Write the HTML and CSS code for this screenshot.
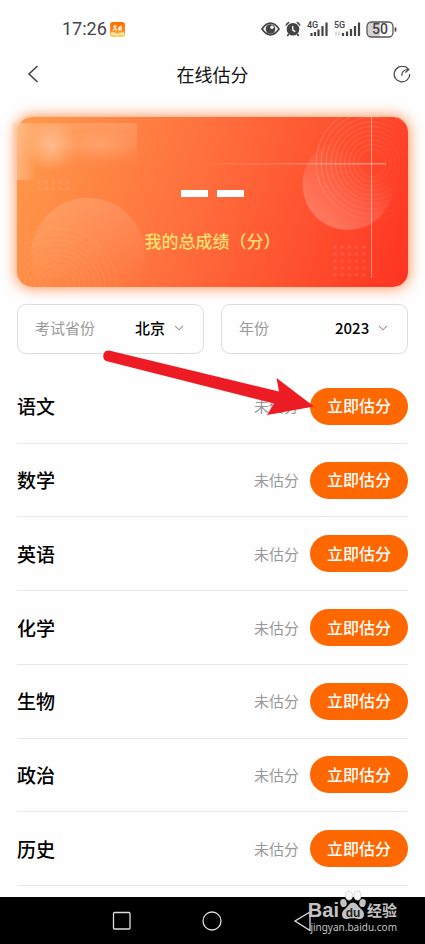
FILE: index.html
```html
<!DOCTYPE html>
<html lang="zh-CN">
<head>
<meta charset="utf-8">
<meta name="viewport" content="width=device-width, initial-scale=1">
<title>在线估分</title>
<link rel="stylesheet" href="styles.css">
</head>
<body>
<div class="screen">
  <div class="status">
    <span class="clock">17:26</span>
    <svg class="app-icon" width="15" height="15" viewBox="0 0 15 15" aria-hidden="true">
      <defs><linearGradient id="app" x1="0" y1="0" x2="0" y2="1"><stop offset="0" stop-color="#ff6a00"/><stop offset=".6" stop-color="#ff8d1c"/><stop offset="1" stop-color="#ffd35a"/></linearGradient></defs>
      <rect width="15" height="15" rx="3" fill="url(#app)"/>
      <path d="M1 10.500q4-.7 6.500 1.500q2.500-2.200 6.500-1.500v2.500q-4-.5-6.500 1.300q-2.500-1.800-6.500-1.300z" fill="#ffe9a8"/>
      <path d="M5 2.800v1.200M3 4.600l4-.6M4 6l2-.5M3 9l.7-1.800l3-.3l-.6 2.200M8 6.700l4-1M9.300 4.500l-.3 4.500M11 3.500v5.500" stroke="#fff" fill="none"/>
    </svg>
    <span class="spacer"></span>
    <svg width="19" height="14" viewBox="0 0 19 14" aria-hidden="true">
      <path d="M1 7Q5 1.200 9.500 1.200T18 7Q14 12.800 9.500 12.800T1 7z" fill="none" stroke="#444" stroke-width="1.700"/>
      <circle cx="9.500" cy="7" r="4.800" fill="#444"/><circle cx="11" cy="5.200" r="1.700" fill="#fff"/>
    </svg>
    <svg class="alarm" width="16" height="16" viewBox="0 0 16 16" aria-hidden="true">
      <circle cx="8" cy="8.300" r="6.300" fill="#444"/>
      <path d="M1 4.500Q2 2 4.300 1.200M15 4.500Q14 2 11.700 1.200M3.800 13l-1.500 2M12.200 13l1.500 2" stroke="#444" stroke-width="1.700" fill="none"/>
      <path d="M7.700 5v3.800l2.500 2" stroke="#fff" stroke-width="1.400" fill="none"/>
    </svg>
    <svg class="signal" width="22" height="16" viewBox="0 0 22 16" aria-hidden="true">
      <text x="0" y="7" class="net">4G</text>
      <path d="M4.500 12v3M8 11v4M11.500 8.500v6.500M15.500 5v10M19.500 1.500v13.500" stroke="#444" stroke-width="2.200" fill="none"/>
    </svg>
    <svg class="signal second" width="27" height="16" viewBox="0 0 27 16" aria-hidden="true">
      <text x="0" y="7" class="net">5G</text>
      <path d="M2 10.500v4M5 10.500v4" stroke="#ccc" stroke-width="1.500"/>
      <path d="M9 12v3M13 10.500v4.500M17 8v7M21 5v10M25 1.500v13.500" stroke="#444" stroke-width="2.200" fill="none"/>
    </svg>
    <svg class="battery" width="31" height="17" viewBox="0 0 31 17" aria-label="50%">
      <path d="M5 1h9v15H5a4 4 0 0 1-4-4V5a4 4 0 0 1 4-4z" fill="#d3d3d3"/>
      <rect x="1" y="1" width="26" height="15" rx="4.500" fill="none" stroke="#555" stroke-width="1.300"/>
      <path d="M29.500 6.500v4" stroke="#444" stroke-width="1.700"/>
      <text x="14" y="13" text-anchor="middle" class="charge">50</text>
    </svg>
  </div>

  <header class="topbar">
    <button class="icon-btn" type="button" aria-label="返回">
      <svg width="12" height="18" viewBox="0 0 12 18"><path d="M10.500 1L2 9l8.500 8" fill="none" stroke="#444" stroke-width="1.600"/></svg>
    </button>
    <h1>在线估分</h1>
    <button class="icon-btn share" type="button" aria-label="分享">
      <svg width="18" height="18" viewBox="0 0 18 18" fill="none" stroke="#444" stroke-width="1.200"><path d="M12 1.900A7.800 7.800 0 1 0 16.800 9"/><path d="M8.800 10.800Q8.600 4.500 15.500 4.500M12.300 1.500l3.500 3l-3.500 3"/></svg>
    </button>
  </header>

  <main>
    <section class="card">
      <svg class="art" viewBox="0 0 391 170" preserveAspectRatio="none" aria-hidden="true">
        <defs>
          <linearGradient id="moon" x1=".2" y1=".9" x2=".65" y2=".25"><stop offset="0" stop-color="#fff" stop-opacity=".24"/><stop offset="1" stop-color="#fff" stop-opacity="0"/></linearGradient>
          <linearGradient id="disc" x1=".5" y1="0" x2=".6" y2="1"><stop offset="0" stop-color="#fff" stop-opacity=".15"/><stop offset=".8" stop-color="#fff" stop-opacity="0"/></linearGradient>
          <linearGradient id="ring" gradientUnits="userSpaceOnUse" x1="300" y1="40" x2="391" y2="60"><stop offset="0" stop-color="#fff" stop-opacity=".2"/><stop offset="1" stop-color="#fff" stop-opacity=".02"/></linearGradient>
          <linearGradient id="hair" gradientUnits="userSpaceOnUse" x1="170" y1="0" x2="369" y2="0"><stop offset="0" stop-color="#fff" stop-opacity="0"/><stop offset="1" stop-color="#fff" stop-opacity=".4"/></linearGradient>
        </defs>
        <circle cx="331" cy="67.500" r="45.500" fill="url(#moon)"/>
        <g fill="none" stroke="url(#ring)">
          <circle cx="355" cy="46" r="14"/><circle cx="355" cy="46" r="18.500"/><circle cx="355" cy="46" r="23"/><circle cx="355" cy="46" r="27.500"/><circle cx="355" cy="46" r="32"/><circle cx="355" cy="46" r="36.500"/><circle cx="355" cy="46" r="41"/><circle cx="355" cy="46" r="46"/><circle cx="355" cy="46" r="51"/><circle cx="355" cy="46" r="56"/>
        </g>
        <rect x="170" y="46" width="199" height="1.500" fill="url(#hair)"/>
        <rect x="354" y="0" width="1" height="161" fill="#fff" fill-opacity=".42"/>
        <circle cx="71" cy="138" r="57" fill="url(#disc)"/>
        <g fill="none" stroke="#fff" stroke-opacity=".09">
          <circle cx="40" cy="171" r="13"/><circle cx="40" cy="171" r="18"/><circle cx="40" cy="171" r="23"/><circle cx="40" cy="171" r="28"/><circle cx="40" cy="171" r="33"/><circle cx="40" cy="171" r="38"/><circle cx="40" cy="171" r="43"/><circle cx="40" cy="171" r="48"/><circle cx="40" cy="171" r="54"/><circle cx="40" cy="171" r="60"/>
        </g>
        <g fill="none" stroke="#fff" stroke-opacity=".12" stroke-width="3.600" stroke-linecap="round" stroke-dasharray="0 7.200">
          <path d="M22 65h29.500M22 72h29.500M318 130h29.500M318 137h29.500M318 144h29.500M318 151h29.500M318 158h29.500"/>
        </g>
      </svg>
      <div class="smudge"></div>
      <div class="score" role="img" aria-label="暂无成绩"><span></span><span></span></div>
      <p class="caption">我的总成绩（分）</p>
    </section>

    <form class="filters">
      <div class="field">
        <label for="province">考试省份</label>
        <select id="province"><option>北京</option></select>
        <svg width="10" height="6" viewBox="0 0 10 6" aria-hidden="true"><path d="M1 .8l4 4l4-4" fill="none" stroke="#999" stroke-width="1.100"/></svg>
      </div>
      <div class="field">
        <label for="year">年份</label>
        <select id="year"><option>2023</option></select>
        <svg width="10" height="6" viewBox="0 0 10 6" aria-hidden="true"><path d="M1 .8l4 4l4-4" fill="none" stroke="#999" stroke-width="1.100"/></svg>
      </div>
    </form>

    <ul class="subjects">
      <li><h2>语文</h2><span class="state">未估分</span><button class="go" type="button">立即估分</button></li>
      <li><h2>数学</h2><span class="state">未估分</span><button class="go" type="button">立即估分</button></li>
      <li><h2>英语</h2><span class="state">未估分</span><button class="go" type="button">立即估分</button></li>
      <li><h2>化学</h2><span class="state">未估分</span><button class="go" type="button">立即估分</button></li>
      <li><h2>生物</h2><span class="state">未估分</span><button class="go" type="button">立即估分</button></li>
      <li><h2>政治</h2><span class="state">未估分</span><button class="go" type="button">立即估分</button></li>
      <li><h2>历史</h2><span class="state">未估分</span><button class="go" type="button">立即估分</button></li>
    </ul>
  </main>

  <nav class="sysnav">
    <button type="button" aria-label="最近任务"><svg width="20" height="20" viewBox="0 0 20 20"><rect x="1.500" y="1.500" width="16.500" height="16.500" rx="1" /></svg></button>
    <button type="button" aria-label="主屏幕"><svg width="20" height="20" viewBox="0 0 20 20"><circle cx="10" cy="10" r="9"/></svg></button>
    <button type="button" aria-label="返回"><svg width="20" height="20" viewBox="0 0 20 20"><path d="M17 1v18.500L2 10z"/></svg></button>
  </nav>

  <svg class="arrow" width="212" height="68" viewBox="0 0 212 68" aria-hidden="true">
    <path d="M7 .5L177 41.500L174.500 28L212 56.500L165 65L172 53.500L5 11.200A5.500 5.500 0 0 1 7 .5z" fill="#ed1c24"/>
  </svg>

  <div class="watermark">
    <div class="brand">
      <span>Bai</span>
      <svg width="28" height="30" viewBox="0 0 28 30" aria-hidden="true">
        <g fill="#c3c3c3"><ellipse cx="4.500" cy="13" rx="3.200" ry="4" transform="rotate(-12 4.500 13)"/><ellipse cx="23.500" cy="13" rx="3.200" ry="4" transform="rotate(12 23.500 13)"/>
        <path d="M14 12.500c3 0 4.500 3 6.500 5s4.500 3.500 4.500 7c0 3-2 4.500-4.500 4.500c-2.500 0-4-.7-6.500-.7s-4 .7-6.500.7c-2.500 0-4.500-1.500-4.500-4.500c0-3.500 2.500-5 4.500-7s3.500-5 6.500-5z"/></g>
        <g fill="#f8f8f8" stroke="#d0d0d0" stroke-width=".8"><ellipse cx="10" cy="5.500" rx="3.400" ry="4.600"/><ellipse cx="18.500" cy="5.500" rx="3.400" ry="4.600"/></g>
        <text x="14" y="26.500" text-anchor="middle" class="du">du</text>
      </svg>
      <span class="cn">经验</span>
    </div>
    <div class="site">jingyan.baidu.com</div>
  </div>
</div>
</body>
</html>
```
FILE: styles.css
```css
* { box-sizing: border-box; }

body {
  margin: 0;
  background: #fefefe;
  color: #111;
  font-family: "Noto Sans CJK SC", sans-serif;
}

button, select {
  margin: 0;
  padding: 0;
  border: 0;
  background: none;
  color: inherit;
  font: inherit;
}

h1, h2, p, ul { margin: 0; padding: 0; }
svg { display: block; flex: none; }

.screen {
  position: relative;
  display: flex;
  flex-direction: column;
  min-height: 100vh;
}

.status {
  display: flex;
  align-items: center;
  height: 50px;
  padding: 8px 28px 0 62px;
}
.clock {
  font: 18px/20px Roboto, sans-serif;
  color: #444;
}
.app-icon { margin-left: 3px; }
.spacer { flex: 1; }
.alarm { margin-left: 5px; }
.signal { margin-left: 6px; }
.second { margin-left: 5px; }
.battery { margin-left: 5px; }
.net { font: 500 9px Roboto, sans-serif; fill: #444; }
.charge { font: 500 14px Roboto, sans-serif; fill: #444; }

.topbar {
  display: grid;
  grid-template-columns: 1fr auto 1fr;
  align-items: center;
  height: 48px;
  margin-bottom: 2px;
  padding: 0 14px;
}
.topbar h1 {
  font-size: 18px;
  line-height: 26px;
  font-weight: 400;
}
.icon-btn {
  display: flex;
  padding-left: 13px;
}
.share {
  padding-left: 0;
  justify-content: flex-end;
}

main {
  flex: 1;
  display: flex;
  flex-direction: column;
  padding: 17px 17px 11px;
}

.card {
  position: relative;
  height: 170px;
  border-radius: 15px;
  background: linear-gradient(110deg, #ff9b4b 0%, #ff6c3c 48%, #ff3321 100%);
  box-shadow: 0 0 14px 1px rgba(255, 110, 30, .75);
  display: flex;
  flex-direction: column;
  align-items: center;
  padding-top: 73px;
}
.art {
  position: absolute;
  inset: 0;
  width: 100%;
  height: 100%;
  border-radius: 15px;
}
.smudge {
  position: absolute;
  top: 6px;
  left: -4px;
  width: 124px;
  height: 57px;
  background:
    radial-gradient(circle at 38px 22px, rgba(255, 222, 195, .5), transparent 26px),
    radial-gradient(ellipse at 88px 22px, rgba(255, 200, 160, .3), transparent 40px),
    linear-gradient(90deg, rgba(255, 205, 165, .65), transparent 24px),
    linear-gradient(180deg, rgba(255, 190, 150, .35), transparent 45px);
}
.score { position: relative; display: flex; gap: 9px; }
.score span { width: 27px; height: 7px; background: #fff; }
.caption {
  position: relative;
  margin-top: 31px;
  font-size: 17px;
  line-height: 26px;
  font-weight: 500;
  color: #ffe071;
}

.filters {
  display: grid;
  grid-template-columns: 1fr 1fr;
  gap: 17px;
  margin-top: 17px;
}
.field {
  display: flex;
  align-items: center;
  height: 50px;
  padding: 0 19px 2px 17px;
  border: 1px solid #ddd;
  border-radius: 9px;
  font-size: 15px;
  line-height: 22px;
}
.field label { flex: 1; color: #999; }
.field select {
  appearance: none;
  margin-right: 8px;
  color: #000;
  font-weight: 500;
}

.subjects {
  flex: 1;
  display: flex;
  flex-direction: column;
  margin-top: 16px;
  list-style: none;
}
.subjects li {
  flex: 1;
  display: flex;
  align-items: center;
  gap: 11px;
  min-height: 60px;
  border-bottom: 1px solid #e8e8e8;
}
.subjects h2 {
  flex: 1;
  font-size: 19px;
  line-height: 28px;
  font-weight: 500;
  color: #000;
}
.state { font-size: 15px; line-height: 22px; color: #999; }
.go {
  height: 37px;
  padding: 0 17px 2px;
  border-radius: 19px;
  background: #ff6700;
  color: #fff;
  font-size: 16px;
  line-height: 24px;
  font-weight: 500;
}

.sysnav {
  display: grid;
  grid-template-columns: repeat(3, 1fr);
  align-items: center;
  height: 47px;
  padding: 0 18%;
  background: #000;
}
.sysnav button { display: flex; justify-content: center; }
.sysnav svg { fill: none; stroke: #ddd; stroke-width: 1.3; }

.arrow { position: absolute; top: 350px; left: 102px; }

.watermark {
  position: absolute;
  right: 28px;
  bottom: 9px;
  color: #c3c3c3;
}
.brand {
  display: flex;
  align-items: flex-end;
  justify-content: flex-end;
  font: bold 20px/20px "Liberation Sans", sans-serif;
}
.brand .cn { font: bold 15px/20px "Noto Sans CJK SC", sans-serif; }
.du { font: bold 12px "Liberation Sans", sans-serif; fill: #222; }
.site {
  font: 10px/15px "Noto Sans", sans-serif;
  text-align: right;
}
```
